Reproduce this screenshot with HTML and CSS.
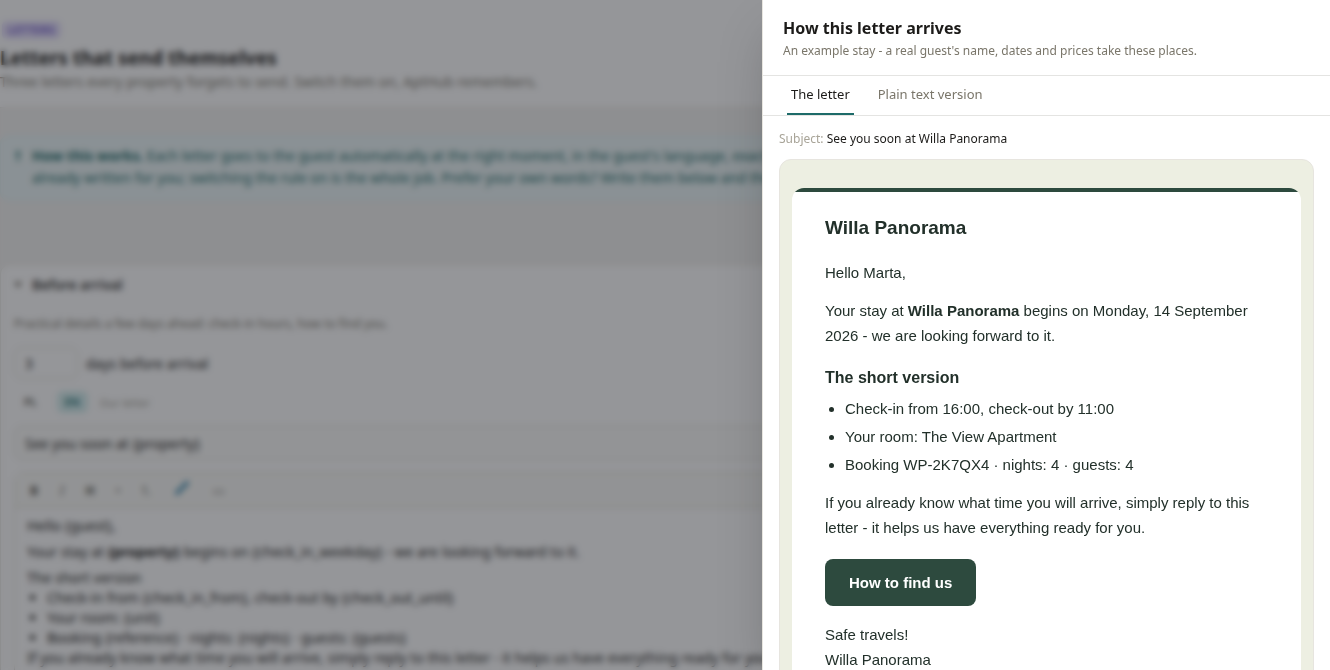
FILE: index.html
```html
<!DOCTYPE html>
<html lang="en">
<head>
    <meta charset="UTF-8">
    <meta name="viewport" content="width=device-width, initial-scale=1.0">
    <title>Letters that send themselves</title>
    <link rel="stylesheet" href="styles.css">
</head>
<body>
    <div class="page">
        <header class="page-header">
            <span class="badge">LETTERS</span>
            <h1>Letters that send themselves</h1>
            <p>Three letters every property forgets to send. Switch them on, AptHub remembers.</p>
        </header>
        <main class="page-body">
            <section class="info">
                <svg class="info-icon" width="8" height="12" viewBox="0 0 8 12"><path d="M4 1v6M4 9v2" stroke="currentColor" stroke-width="3"/></svg>
                <p><strong>How this works.</strong> Each letter goes to the guest automatically at the right moment, in the guest's language, exactly once.<br>
                already written for you; switching the rule on is the whole job. Prefer your own words? Write them below and they win.</p>
            </section>
            <section class="rule">
                <h2><svg width="8" height="12" viewBox="0 0 8 12"><path d="M0 3h8L4 9z" fill="#7a766a"/></svg>Before arrival</h2>
                <p class="hint">Practical details a few days ahead: check-in hours, how to find you.</p>
                <div class="days">
                    <input type="text" id="days" value="3">
                    <label for="days">days before arrival</label>
                </div>
                <div class="langs">
                    <button type="button">PL</button>
                    <button type="button" class="active">EN</button>
                    <span>Our letter</span>
                </div>
                <input type="text" class="subject-input" aria-label="Subject" value="See you soon at {property}">
                <div class="editor">
                    <div class="toolbar">
                        <button type="button"><b>B</b></button>
                        <button type="button"><i>I</i></button>
                        <button type="button"><b>H</b></button>
                        <button type="button">•</button>
                        <button type="button">1.</button>
                        <button type="button" aria-label="Link"><svg width="14" height="14" viewBox="0 0 14 14"><path d="M2 12l4-4M8 6l4-4" stroke="#4a93b5" stroke-width="4" stroke-linecap="round"/></svg></button>
                        <button type="button">▭</button>
                    </div>
                    <div class="editor-text">
                        <p>Hello {guest},</p>
                        <p>Your stay at <strong>{property}</strong> begins on {check_in_weekday} - we are looking forward to it.</p>
                        <h3>The short version</h3>
                        <ul>
                            <li>Check-in from {check_in_from}, check-out by {check_out_until}</li>
                            <li>Your room: {unit}</li>
                            <li>Booking {reference} · nights: {nights} · guests: {guests}</li>
                        </ul>
                        <p>If you already know what time you will arrive, simply reply to this letter - it helps us have everything ready for you.</p>
                    </div>
                </div>
            </section>
        </main>
    </div>
    <div class="overlay"></div>
    <aside class="drawer">
        <header class="drawer-header">
            <h2>How this letter arrives</h2>
            <p>An example stay - a real guest's name, dates and prices take these places.</p>
        </header>
        <nav class="tabs">
            <button type="button" class="active">The letter</button>
            <button type="button">Plain text version</button>
        </nav>
        <div class="preview">
            <p class="subject"><span>Subject:</span> See you soon at Willa Panorama</p>
            <div class="frame">
                <article class="letter">
                    <h1>Willa Panorama</h1>
                    <p>Hello Marta,</p>
                    <p>Your stay at <strong>Willa Panorama</strong> begins on Monday, 14 September 2026 - we are looking forward to it.</p>
                    <h2>The short version</h2>
                    <ul>
                        <li>Check-in from 16:00, check-out by 11:00</li>
                        <li>Your room: The View Apartment</li>
                        <li>Booking WP-2K7QX4 · nights: 4 · guests: 4</li>
                    </ul>
                    <p>If you already know what time you will arrive, simply reply to this letter - it helps us have everything ready for you.</p>
                    <a class="cta" href="#">How to find us</a>
                    <p>Safe travels!<br>Willa Panorama</p>
                </article>
            </div>
        </div>
    </aside>
</body>
</html>
```
FILE: styles.css
```css
* {
    box-sizing: border-box;
}
body {
    margin: 0;
    height: 100vh;
    overflow: hidden;
    font-family: "Noto Sans", sans-serif;
    font-size: 14px;
    color: #1c1b19;
    background: #f3f2f0;
}
h1, h2, h3, p, ul {
    margin: 0;
}
button, input {
    font: inherit;
    color: inherit;
}

/* page behind the drawer */
.page-header {
    background: #fff;
    padding: 19px 0 14px;
    height: 108px;
    border-bottom: 1px solid #e7e5df;
}
.badge {
    display: inline-block;
    margin-left: 2px;
    padding: 0 6px;
    border-radius: 5px;
    background: #e4defa;
    color: #5b3fc4;
    font-size: 10px;
    font-weight: 600;
    line-height: 18px;
    letter-spacing: 1px;
}
.page-header h1 {
    font-size: 19px;
    line-height: 28px;
    margin-top: 5px;
}
.page-header p {
    color: #7a766a;
    font-size: 14px;
    line-height: 20px;
}
.page-body {
    padding-top: 26px;
    white-space: nowrap;
}
.info {
    display: flex;
    gap: 10px;
    padding: 10px 13px 12px;
    background: #ecf6f7;
    border: 1px solid #e0eff1;
    border-radius: 10px;
    color: #1d6b69;
    line-height: 22px;
}
.info-icon {
    margin-top: 5px;
    flex: none;
}
.rule {
    margin-top: 62px;
    padding: 8px 13px;
    background: #fff;
    border: 1px solid #e7e5df;
    border-radius: 10px;
}
.rule h2 {
    display: flex;
    align-items: center;
    gap: 10px;
    font-size: 14px;
    font-weight: 500;
    line-height: 24px;
}
.hint {
    margin-top: 17px;
    color: #7a766a;
    font-size: 12px;
    line-height: 20px;
}
.days {
    display: flex;
    align-items: center;
    gap: 8px;
    margin-top: 13px;
}
.days input {
    width: 64px;
    height: 32px;
    padding: 0 10px;
    border: 1px solid #e0ddd2;
    border-radius: 8px;
}
.langs {
    display: flex;
    align-items: center;
    gap: 12px;
    margin-top: 12px;
    padding-left: 2px;
    font-size: 11px;
    color: #a29e92;
}
.langs button {
    padding: 0 8px;
    border: 0;
    border-radius: 6px;
    background: none;
    color: #55524a;
    font-weight: 600;
    line-height: 22px;
}
.langs .active {
    background: #d5eeee;
    color: #14686a;
}
.subject-input {
    display: block;
    width: 100%;
    height: 34px;
    margin-top: 13px;
    padding: 0 10px;
    border: 1px solid #dedbd0;
    border-radius: 8px;
    background: #fcfcfa;
}
.editor {
    margin-top: 12px;
    border: 1px solid #dedbd0;
    border-radius: 8px;
}
.toolbar {
    display: flex;
    gap: 4px;
    padding: 5px 7px;
    border-bottom: 1px solid #dedbd0;
    background: #fafaf7;
}
.toolbar button {
    min-width: 24px;
    height: 24px;
    padding: 0;
    border: 0;
    background: none;
    font-size: 12px;
    color: #55524a;
}
.toolbar button:nth-child(n+6) {
    margin-left: 8px;
}
.editor-text {
    padding: 8px 12px;
    line-height: 20px;
}
.editor-text p {
    margin-bottom: 6px;
}
.editor-text h3 {
    font-size: 14px;
    font-weight: 400;
}
.editor-text ul {
    padding-left: 20px;
}

.overlay {
    position: fixed;
    inset: 0;
    background: rgba(20, 22, 28, 0.45);
    backdrop-filter: blur(3px);
}

/* drawer */
.drawer {
    position: fixed;
    top: 0;
    right: 0;
    bottom: 0;
    width: 568px;
    max-width: 100%;
    overflow: hidden;
    background: #fff;
    border-left: 1px solid #e7e5df;
    box-shadow: 0 25px 50px -12px rgba(0, 0, 0, 0.25);
}
.drawer-header {
    padding: 16px 20px 13px;
    border-bottom: 1px solid #e4e4e2;
}
.drawer-header h2 {
    font-size: 16px;
    line-height: 24px;
}
.drawer-header p {
    color: #7a766a;
    font-size: 12px;
    line-height: 22px;
}
.tabs {
    display: flex;
    gap: 20px;
    padding: 0 24px;
    border-bottom: 1px solid #e4e4e2;
}
.tabs button {
    padding: 0 4px;
    border: 0;
    border-bottom: 2px solid transparent;
    background: none;
    color: #7a766a;
    font-size: 13px;
    line-height: 37px;
}
.tabs .active {
    border-color: #1d6b69;
    color: #1c1b19;
}
.preview {
    padding: 13px 16px;
}
.subject {
    margin-bottom: 10px;
    font-size: 12px;
    line-height: 20px;
}
.subject span {
    color: #a8a498;
}
.frame {
    padding: 28px 12px;
    border: 1px solid #e7e5df;
    border-radius: 12px;
    background: #edefe2;
}

/* the letter itself */
.letter {
    padding: 28px 33px;
    border-radius: 12px;
    background: linear-gradient(#2d4a3e 4px, #fff 4px);
    color: #22302a;
    font-family: "Liberation Sans", Arial, sans-serif;
    font-size: 15px;
    line-height: 25px;
}
.letter h1 {
    margin-bottom: 20px;
    font-size: 19px;
    line-height: 24px;
}
.letter p {
    margin-bottom: 13px;
}
.letter h2 {
    margin: 18px 0 6px;
    font-size: 16px;
    line-height: 24px;
}
.letter ul {
    display: grid;
    gap: 3px;
    margin-bottom: 13px;
    padding-left: 20px;
}
.cta {
    display: inline-block;
    margin: 6px 0 16px;
    padding: 11px 24px;
    border-radius: 8px;
    background: #2d4a3e;
    color: #fff;
    font-weight: bold;
    text-decoration: none;
}
```
